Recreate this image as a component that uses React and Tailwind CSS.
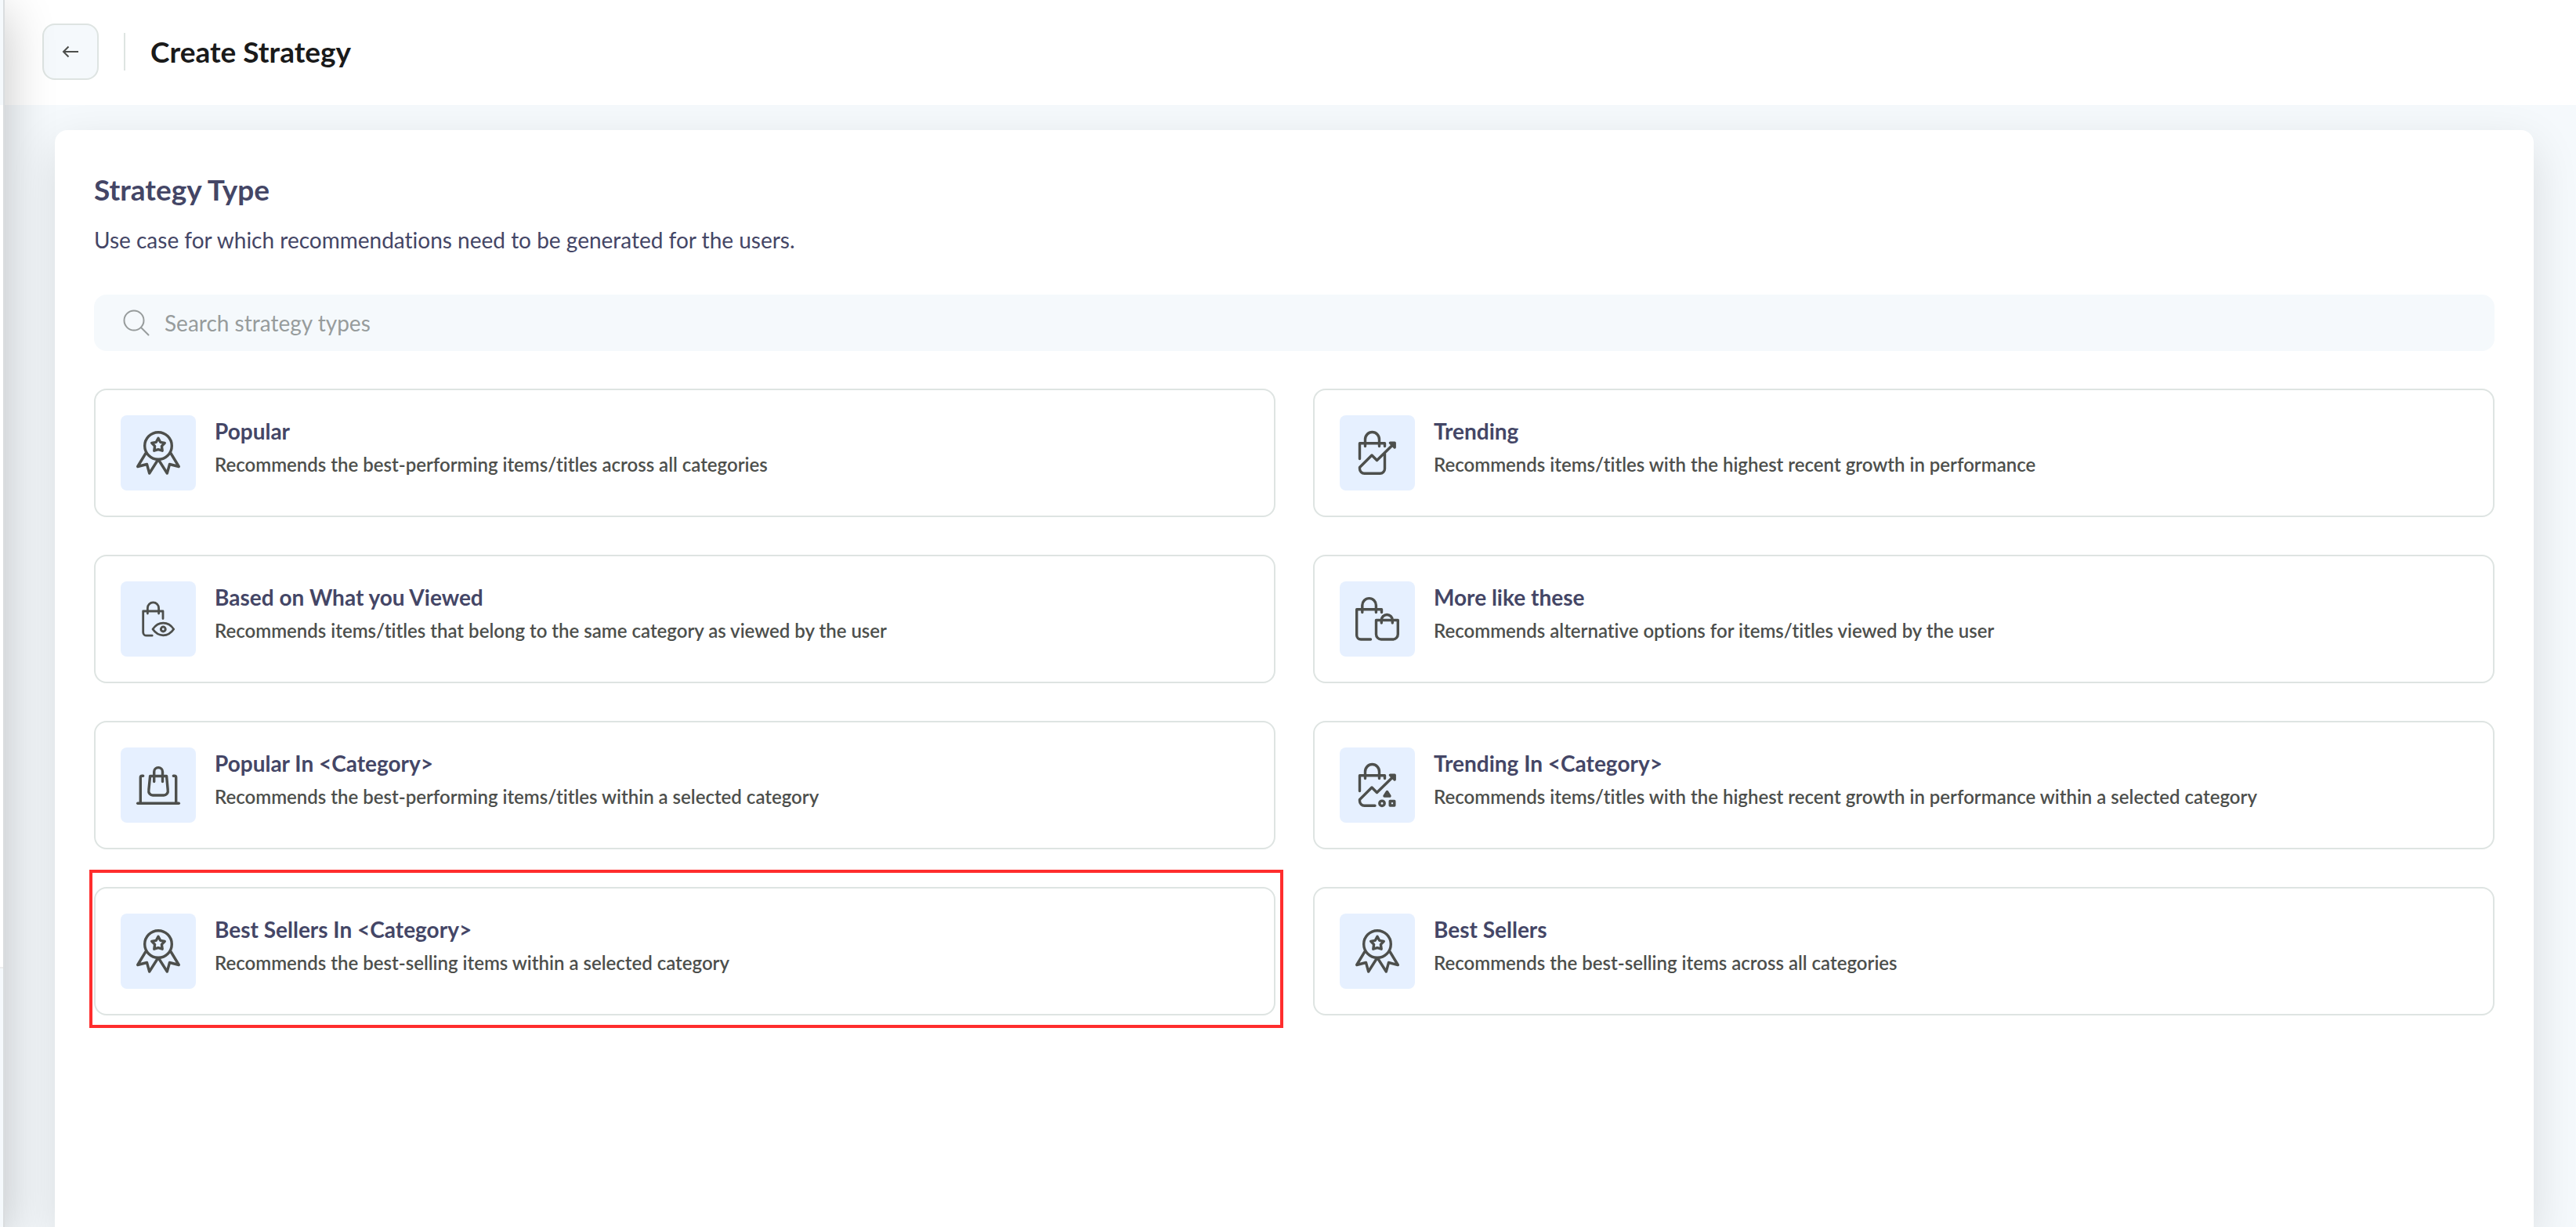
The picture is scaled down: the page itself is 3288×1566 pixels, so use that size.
import React from "react";

const AwardIcon = () => (
  <svg viewBox="0 0 96 96" className="size-24" fill="none" stroke="currentColor" strokeWidth="3.4" strokeLinecap="round" strokeLinejoin="round">
    <circle cx="48" cy="39" r="17.3" />
    <path d="M48 29.3l2.7 5 5.6 1-3.9 4.1.8 5.8-5.2-1.6-5.2 1.6.8-5.8-3.9-4.1 5.6-1z" />
    <path d="M32 48.5L21.7 65.5 33.5 62.5 36.7 74 47.5 57" />
    <path d="M64 48.5L74.3 65.5 62.5 62.5 59.3 74 48.5 57" />
  </svg>
);

const TrendingIcon = () => (
  <svg viewBox="0 0 96 96" className="size-24" fill="none" stroke="currentColor" strokeWidth="3.4" strokeLinecap="round" strokeLinejoin="round">
    <path d="M32.5 39.5V31a9 9.5 0 0 1 18 0v8.5" />
    <path d="M25.5 55.5V35.7H57.5V39.5" />
    <path d="M69 36.5L47.5 57.5 41 51 25.5 66.5V68.3A6 6 0 0 0 31.5 74.3H51.5A6 6 0 0 0 57.5 68.3V49" />
    <path d="M64.5 35.3H70.2V41z" fill="currentColor" />
  </svg>
);

const ViewedIcon = () => (
  <svg viewBox="0 0 96 96" className="size-24" fill="none" stroke="currentColor" strokeWidth="2.8" strokeLinecap="round" strokeLinejoin="round">
    <path d="M34.4 41V34a7.1 7.1 0 0 1 14.2 0v7" />
    <path d="M40.2 69.2H33A4.3 4.3 0 0 1 28.7 64.9V38H54V47.5" />
    <path d="M41 61C44.5 56 49 53.2 54.3 53.2S64.3 56 67.7 61C64.3 66 59.6 68.8 54.3 68.8S44.5 66 41 61z" />
    <circle cx="54.3" cy="61" r="2.9" strokeWidth="3" />
  </svg>
);

const SimilarIcon = () => (
  <svg viewBox="0 0 96 96" className="size-24" fill="none" stroke="currentColor" strokeWidth="3.4" strokeLinecap="round" strokeLinejoin="round">
    <path d="M28.8 39.5V30.5a8.8 8.9 0 0 1 17.6 0V39.5" />
    <path d="M39.5 74H27A5.3 5.3 0 0 1 21.7 68.7V35.7H53.5V39.5" />
    <path d="M46.5 49.5H74.3V67.5A6.5 6.5 0 0 1 67.8 74H53A6.5 6.5 0 0 1 46.5 67.5z" />
    <path d="M53.3 53V49.5a7 7 0 0 1 14 0V53" />
  </svg>
);

const LaptopBagIcon = () => (
  <svg viewBox="0 0 96 96" className="size-24" fill="none" stroke="currentColor" strokeWidth="3.4" strokeLinecap="round" strokeLinejoin="round">
    <path d="M21.7 71.3H74.3" />
    <path d="M25.3 71V38.3A2 2 0 0 1 27.3 36.3H28.7" />
    <path d="M70.7 71V38.3A2 2 0 0 0 68.7 36.3H67.3" />
    <path d="M37.6 36.5H58.6L60.3 55A5.3 5.3 0 0 1 55 61H41A5.3 5.3 0 0 1 35.8 55z" />
    <path d="M42.7 43.5V31a5.4 5.4 0 0 1 10.8 0V43.5" />
  </svg>
);

const TrendingCategoryIcon = () => (
  <svg viewBox="0 0 96 96" className="size-24" fill="none" stroke="currentColor" strokeWidth="3.4" strokeLinecap="round" strokeLinejoin="round">
    <path d="M32.5 39.5V31a9 9.5 0 0 1 18 0v8.5" />
    <path d="M25.5 55.5V35.7H57.5V39.5" />
    <path d="M69 36.5L47.5 57.5 41 51 25.5 66.5V68.3A6 6 0 0 0 31.5 74.3H45" />
    <path d="M64.5 35.3H70.2V41z" fill="currentColor" />
    <path d="M60.5 56.5L64 62H57z" />
    <circle cx="54" cy="71.3" r="3.2" />
    <path d="M64.2 68.5H69.8V74H64.2z" />
  </svg>
);

const strategies = [
  {
    icon: AwardIcon,
    title: "Popular",
    description: "Recommends the best-performing items/titles across all categories",
  },
  {
    icon: TrendingIcon,
    title: "Trending",
    description: "Recommends items/titles with the highest recent growth in performance",
  },
  {
    icon: ViewedIcon,
    title: "Based on What you Viewed",
    description: "Recommends items/titles that belong to the same category as viewed by the user",
  },
  {
    icon: SimilarIcon,
    title: "More like these",
    description: "Recommends alternative options for items/titles viewed by the user",
  },
  {
    icon: LaptopBagIcon,
    title: "Popular In <Category>",
    description: "Recommends the best-performing items/titles within a selected category",
  },
  {
    icon: TrendingCategoryIcon,
    title: "Trending In <Category>",
    description: "Recommends items/titles with the highest recent growth in performance within a selected category",
  },
  {
    icon: AwardIcon,
    title: "Best Sellers In <Category>",
    description: "Recommends the best-selling items within a selected category",
    highlighted: true,
  },
  {
    icon: AwardIcon,
    title: "Best Sellers",
    description: "Recommends the best-selling items across all categories",
  },
];

const StrategyCard = ({ strategy }) => {
  const Icon = strategy.icon;

  return (
    <li className="relative">
      <button
        type="button"
        className="flex w-full items-start gap-6 rounded-2xl border-2 border-[#dee4e2] bg-white p-8 text-left"
      >
        <span className="size-24 shrink-0 rounded-lg bg-[#e6f0ff] text-[#4d4f4c]">
          <Icon />
        </span>
        <span className="flex flex-col gap-[3px]">
          <span className="text-[28px] leading-10 font-bold text-[#444666]">{strategy.title}</span>
          <span className="text-[24px] leading-10 font-semibold text-[#4d4f4c]">{strategy.description}</span>
        </span>
      </button>
      {strategy.highlighted && (
        <div className="pointer-events-none absolute -top-[22px] -right-[10px] -bottom-4 -left-[6px] border-4 border-[#ff2d2d]" />
      )}
    </li>
  );
};

const App = () => {
  return (
    <div className="flex min-h-screen overflow-hidden bg-[#f5f9fc] font-['Lato',sans-serif] [font-variant-ligatures:none]">
      {/* collapsed sidebar, only its edge stays on screen */}
      <aside className="relative z-10 -ml-[314px] flex w-80 shrink-0 flex-col border-r-2 border-[#dadddf] bg-white shadow-[0_16px_60px_rgba(0,0,0,0.24)]">
        <div className="h-[134px] bg-[#f5f9fc]" />
        <div className="grow" />
        <div className="h-[332px] border-t-2 border-[#eeeeee] bg-[#f5f9fc]" />
      </aside>

      <div className="flex min-w-0 flex-1 flex-col">
        <header className="flex h-[134px] items-center bg-white pb-0.5 pl-12">
          <button
            type="button"
            aria-label="Back"
            className="flex size-[72px] items-center justify-center rounded-2xl border-2 border-[#dee4e2] bg-[#f5f9fc] text-[#4d4f4c]"
          >
            <svg viewBox="0 0 24 24" className="size-6" fill="none" stroke="currentColor" strokeWidth="2">
              <path d="M22 12H3M9.5 5.5L3 12L9.5 18.5" />
            </svg>
          </button>
          <div className="mx-8 h-12 w-[2px] bg-[#dee4e2]" />
          <h1 className="text-[37px] leading-10 font-bold text-[#1a1a1a]">Create Strategy</h1>
        </header>

        <main className="flex flex-1 flex-col overflow-hidden pt-8 pr-[54px] pl-16">
          <section className="flex-1 rounded-t-2xl bg-white px-[50px] pt-[50px] pb-12 shadow-[0_20px_60px_rgba(20,20,0,0.12)]">
            <h2 className="text-[37px] leading-[52px] font-bold text-[#444666]">Strategy Type</h2>
            <p className="mt-[18px] text-[28px] leading-10 text-[#444666]">
              Use case for which recommendations need to be generated for the users.
            </p>

            <label className="mt-[50px] flex h-[72px] items-center gap-[18px] rounded-2xl bg-[#f5f9fc] pl-9 text-[#979c9c]">
              <svg viewBox="0 0 36 36" className="size-9" fill="none" stroke="currentColor" strokeWidth="2" strokeLinecap="round">
                <circle cx="15" cy="15" r="12.5" />
                <path d="M24 24L33.5 33.5" />
              </svg>
              <input
                type="text"
                aria-label="Search strategy types"
                placeholder="Search strategy types"
                className="flex-1 bg-transparent text-[28px] text-[#444666] outline-none placeholder:text-[#979c9c]"
              />
            </label>

            <ul className="mt-12 grid grid-cols-2 gap-12">
              {strategies.map((strategy) => (
                <StrategyCard key={strategy.title} strategy={strategy} />
              ))}
            </ul>
          </section>
        </main>
      </div>
    </div>
  );
};

export default App;
